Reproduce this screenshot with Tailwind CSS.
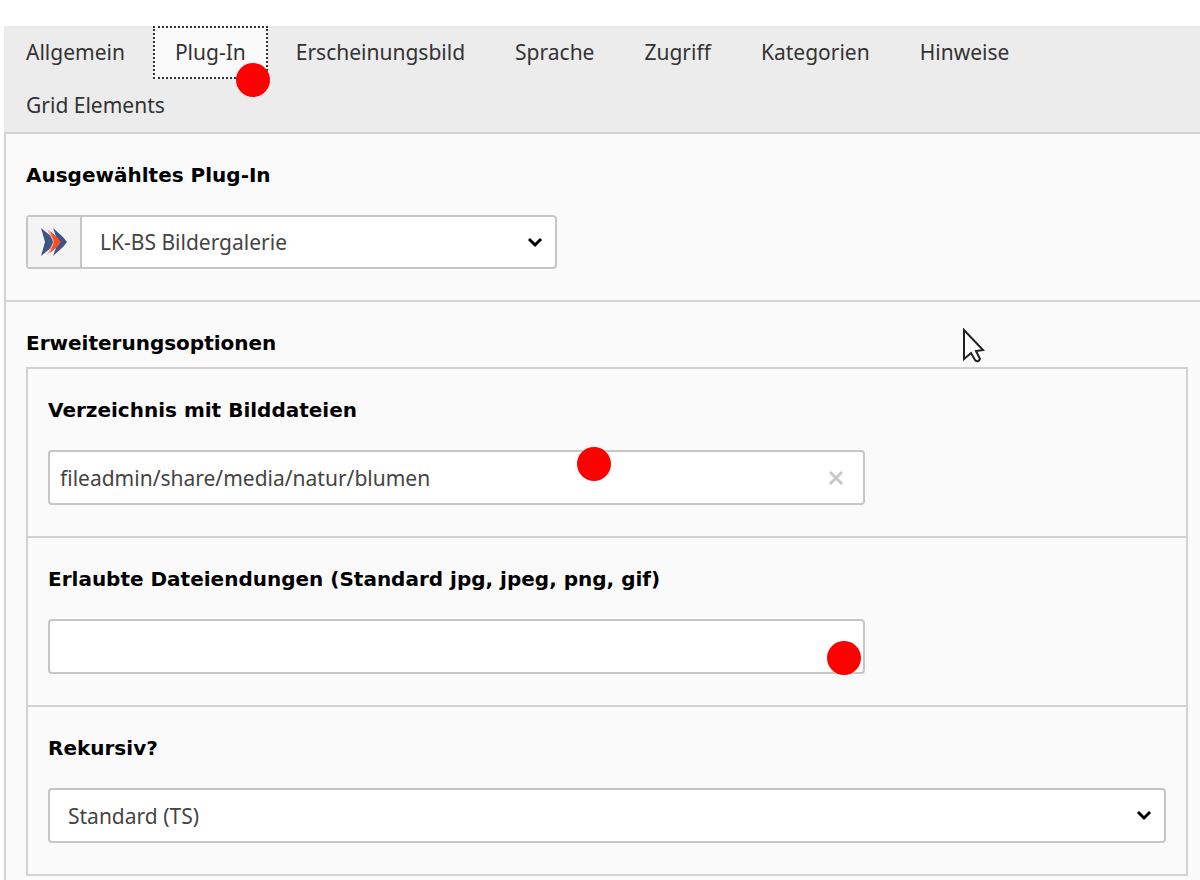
<!DOCTYPE html>
<html lang="de">
<head>
    <meta charset="UTF-8">
    <meta name="viewport" content="width=device-width, initial-scale=1.0">
    <title>Plug-In bearbeiten</title>
    <script src="https://cdn.jsdelivr.net/npm/@tailwindcss/browser@4"></script>
</head>
<body class="flex min-h-screen flex-col bg-white pt-[26px] pl-1 font-['Noto_Sans','DejaVu_Sans',sans-serif] text-[21px] leading-7 text-[#444444]">
    <!-- Tabs -->
    <nav class="flex flex-wrap gap-x-[6px] bg-[#ececec] text-[#333333]">
        <a href="#allgemein" class="px-[22px] pt-3 pb-[13px]">Allgemein</a>
        <a href="#plugin" class="relative border-2 border-dotted border-[#333333] bg-[#fafafa] px-5 pt-[10px] pb-[11px]">
            Plug-In
            <span class="absolute -right-1 -bottom-5 size-[34px] rounded-full bg-[#ff0000]"></span>
        </a>
        <a href="#erscheinungsbild" class="px-[22px] pt-3 pb-[13px]">Erscheinungsbild</a>
        <a href="#sprache" class="px-[22px] pt-3 pb-[13px]">Sprache</a>
        <a href="#zugriff" class="px-[22px] pt-3 pb-[13px]">Zugriff</a>
        <a href="#kategorien" class="px-[22px] pt-3 pb-[13px]">Kategorien</a>
        <a href="#hinweise" class="px-[22px] pt-3 pb-[13px]">Hinweise</a>
        <a href="#grid" class="px-[22px] pt-3 pb-[13px]">Grid Elements</a>
    </nav>

    <main class="flex-1 border-t-2 border-l-2 border-[#d2d2d2] bg-[#fafafa]">
        <!-- Selected plug-in -->
        <section class="border-b-2 border-[#d2d2d2] px-5 pt-[27px] pb-[31px]">
            <label for="plugin-type" class="block font-['DejaVu_Sans',sans-serif] text-[20px] font-bold text-black">Ausgewähltes Plug-In</label>
            <div class="relative mt-[26px] flex h-[54px] max-w-[531px] rounded-[4px] border-2 border-[#c6c6c6] bg-white">
                <span class="flex w-[54px] items-center justify-center border-r-2 border-[#c6c6c6] bg-[#f4f4f4]">
                    <svg class="h-7 w-7" viewBox="0 0 28 28">
                        <path d="M1 0 L12 9 L15 14 L12 19 L1 28 L5 14 Z" fill="#3b5686"/>
                        <path d="M13 0 L23 9 L27 14 L23 19 L13 28 L18 14 Z" fill="#3b5686"/>
                        <path d="M7 1 L16 9 L19 14 L16 19 L7 27 L13 14 Z" fill="#f7a58c"/>
                        <path d="M10 3 L17 9 L21 14 L17 19 L10 25 L14 14 Z" fill="#f4502a"/>
                    </svg>
                </span>
                <select id="plugin-type" class="flex-1 appearance-none bg-transparent px-[18px] outline-none">
                    <option>LK-BS Bildergalerie</option>
                </select>
                <svg class="pointer-events-none absolute top-[19px] right-3 h-3 w-4" viewBox="0 0 16 12" fill="none" stroke="#000000" stroke-width="3">
                    <path d="M2 3 L8 9 L14 3"/>
                </svg>
            </div>
        </section>

        <!-- Extension options -->
        <section class="relative px-5 pt-[27px]">
            <h2 class="font-['DejaVu_Sans',sans-serif] text-[20px] font-bold text-black">Erweiterungsoptionen</h2>
            <svg class="absolute top-[26px] left-[956px] h-9 w-6" viewBox="0 0 24 36">
                <path d="M2 2 L2 31 L9 25 L13 32 Q16 35 18 31 L14 23 L21 22 Z" fill="#ffffff" stroke="#222222" stroke-width="2"/>
            </svg>

            <div class="mt-[10px] mr-[-8px] border-2 border-[#d2d2d2]">
                <div class="border-b-2 border-[#d2d2d2] px-5 pt-[27px] pb-[31px]">
                    <label for="directory" class="block font-['DejaVu_Sans',sans-serif] text-[20px] font-bold text-black">Verzeichnis mit Bilddateien</label>
                    <div class="relative mt-[26px] max-w-[817px]">
                        <input id="directory" type="text" value="fileadmin/share/media/natur/blumen" class="block h-[55px] w-full rounded-[4px] border-2 border-[#c6c6c6] bg-white px-[10px] outline-none">
                        <button type="button" aria-label="Leeren" class="absolute top-5 right-[21px]">
                            <svg class="h-4 w-4" viewBox="0 0 16 16" stroke="#c8c8c8" stroke-width="3">
                                <path d="M2 2 L14 14 M14 2 L2 14"/>
                            </svg>
                        </button>
                        <span class="absolute -top-[3px] left-[529px] size-[34px] rounded-full bg-[#ff0000]"></span>
                    </div>
                </div>

                <div class="border-b-2 border-[#d2d2d2] px-5 pt-[27px] pb-[31px]">
                    <label for="extensions" class="block font-['DejaVu_Sans',sans-serif] text-[20px] font-bold text-black">Erlaubte Dateiendungen (Standard jpg, jpeg, png, gif)</label>
                    <div class="relative mt-[26px] max-w-[817px]">
                        <input id="extensions" type="text" class="block h-[55px] w-full rounded-[4px] border-2 border-[#c6c6c6] bg-white px-[10px] outline-none">
                        <span class="absolute right-1 -bottom-px size-[34px] rounded-full bg-[#ff0000]"></span>
                    </div>
                </div>

                <div class="px-5 pt-[27px] pb-[31px]">
                    <label for="recursive" class="block font-['DejaVu_Sans',sans-serif] text-[20px] font-bold text-black">Rekursiv?</label>
                    <div class="relative mt-[26px]">
                        <select id="recursive" class="block h-[55px] w-full appearance-none rounded-[4px] border-2 border-[#c6c6c6] bg-white px-[18px] outline-none">
                            <option>Standard (TS)</option>
                        </select>
                        <svg class="pointer-events-none absolute top-[21px] right-[14px] h-3 w-4" viewBox="0 0 16 12" fill="none" stroke="#000000" stroke-width="3">
                            <path d="M2 3 L8 9 L14 3"/>
                        </svg>
                    </div>
                </div>
            </div>
        </section>
    </main>
</body>
</html>
